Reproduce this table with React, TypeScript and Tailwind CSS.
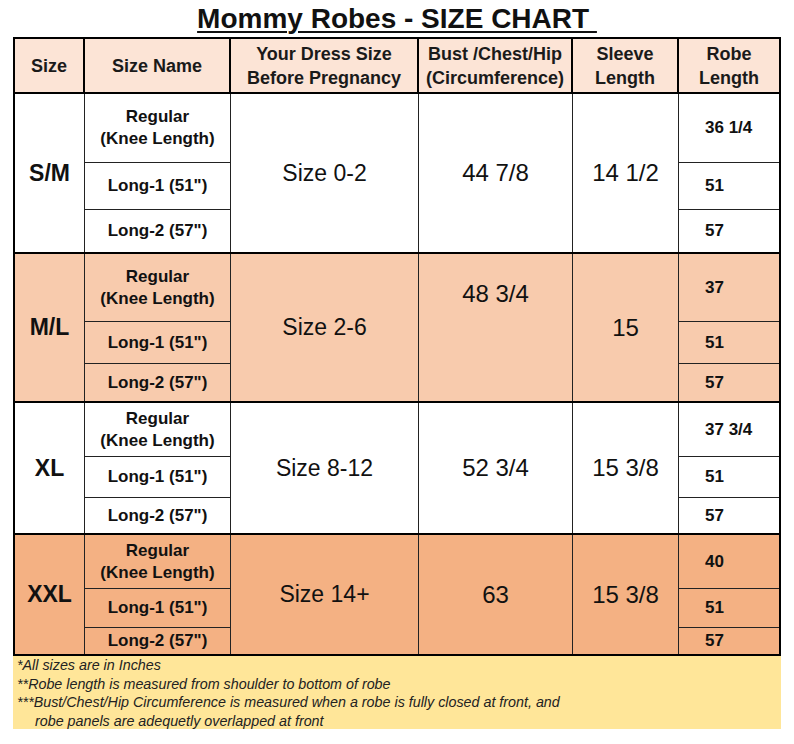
const sections = [
  {
    size: "S/M",
    dress: "Size 0-2",
    bust: "44 7/8",
    sleeve: "14 1/2",
    robes: ["36 1/4", "51", "57"],
    bg: "bg-white",
    box: "h-[160px] border-b-2",
    rows: ["h-[69px]", "h-[47px]"],
    bustTop: false,
  },
  {
    size: "M/L",
    dress: "Size 2-6",
    bust: "48 3/4",
    sleeve: "15",
    robes: ["37", "51", "57"],
    bg: "bg-[#f8cbad]",
    box: "h-[149px] border-b-2",
    rows: ["h-[68px]", "h-[42px]"],
    bustTop: true,
  },
  {
    size: "XL",
    dress: "Size 8-12",
    bust: "52 3/4",
    sleeve: "15 3/8",
    robes: ["37 3/4", "51", "57"],
    bg: "bg-white",
    box: "h-[132px] border-b-2",
    rows: ["h-[54px]", "h-[41px]"],
    bustTop: false,
  },
  {
    size: "XXL",
    dress: "Size 14+",
    bust: "63",
    sleeve: "15 3/8",
    robes: ["40", "51", "57"],
    bg: "bg-[#f4b183]",
    box: "h-[119px]",
    rows: ["h-[54px]", "h-[39px]"],
    bustTop: false,
  },
];

const names = [
  <>
    Regular
    <br />
    (Knee Length)
  </>,
  <>Long-1 (51")</>,
  <>Long-2 (57")</>,
];

const cols = ["w-[70px]", "w-[146px]", "w-[188px]", "w-[154px]", "w-[106px]"];

export default function App() {
  return (
    <div className="w-[794px] h-[744px] bg-white [font-family:'Liberation_Sans',Arial,sans-serif] text-[#111]">
      {/* Title */}
      <div className="h-[37px] pt-[3px] text-center">
        <span className="text-[28px] leading-[32px] font-bold underline decoration-2 underline-offset-[3px]">
          Mommy Robes - SIZE CHART&nbsp;
        </span>
      </div>

      <div className="mx-auto w-[768px]">
        <div className="border-2 border-black">
          {/* Header */}
          <div className="flex h-[55px] border-b-2 border-black bg-[#fce4d6] text-[18px] leading-[24px] font-bold text-[#1a1a1a]">
            {[
              <>Size</>,
              <>Size Name</>,
              <>
                Your Dress Size
                <br />
                Before Pregnancy
              </>,
              <>
                Bust /Chest/Hip
                <br />
                (Circumference)
              </>,
              <>
                Sleeve
                <br />
                Length
              </>,
            ].map((label, i) => (
              <div
                key={i}
                className={`${cols[i]} shrink-0 flex items-center justify-center text-center border-r-2 border-black`}
              >
                <div>{label}</div>
              </div>
            ))}
            <div className="flex-1 flex items-center justify-center text-center">
              <div>
                Robe
                <br />
                Length
              </div>
            </div>
          </div>

          {/* Body */}
          {sections.map((s) => (
            <div key={s.size} className={`flex ${s.box} border-black ${s.bg}`}>
              <div className="w-[70px] shrink-0 flex items-center justify-center border-r border-[#222] text-[23px] font-bold">
                {s.size}
              </div>
              <div className="w-[146px] shrink-0 flex flex-col border-r border-[#222] text-[17px] leading-[22px] font-bold text-center">
                {names.map((n, i) => (
                  <div
                    key={i}
                    className={`flex items-center justify-center ${
                      i < 2 ? `${s.rows[i]} border-b border-[#222]` : "flex-1"
                    }`}
                  >
                    <div>{n}</div>
                  </div>
                ))}
              </div>
              <div className="w-[188px] shrink-0 flex items-center justify-center border-r border-[#222] text-[23px]">
                {s.dress}
              </div>
              <div
                className={`w-[154px] shrink-0 flex justify-center border-r border-[#222] text-[24px] ${
                  s.bustTop ? "items-start pt-[22px]" : "items-center"
                }`}
              >
                {s.bust}
              </div>
              <div className="w-[106px] shrink-0 flex items-center justify-center border-r border-[#222] text-[24px]">
                {s.sleeve}
              </div>
              <div className="flex-1 flex flex-col text-[17px] font-bold">
                {s.robes.map((r, i) => (
                  <div
                    key={i}
                    className={`flex items-center pl-[26px] ${
                      i < 2 ? `${s.rows[i]} border-b border-[#222]` : "flex-1"
                    }`}
                  >
                    {r}
                  </div>
                ))}
              </div>
            </div>
          ))}
        </div>

        {/* Notes */}
        <div className="h-[73px] bg-[#ffe699] px-[4px] text-[14.3px] leading-[18.5px] italic text-[#222]">
          <div>*All sizes are in Inches</div>
          <div>**Robe length is measured from shoulder to bottom of robe</div>
          <div>***Bust/Chest/Hip Circumference is measured when a robe is fully closed at front, and</div>
          <div className="pl-[18px]">robe panels are adequetly overlapped at front</div>
        </div>
      </div>
    </div>
  );
}
